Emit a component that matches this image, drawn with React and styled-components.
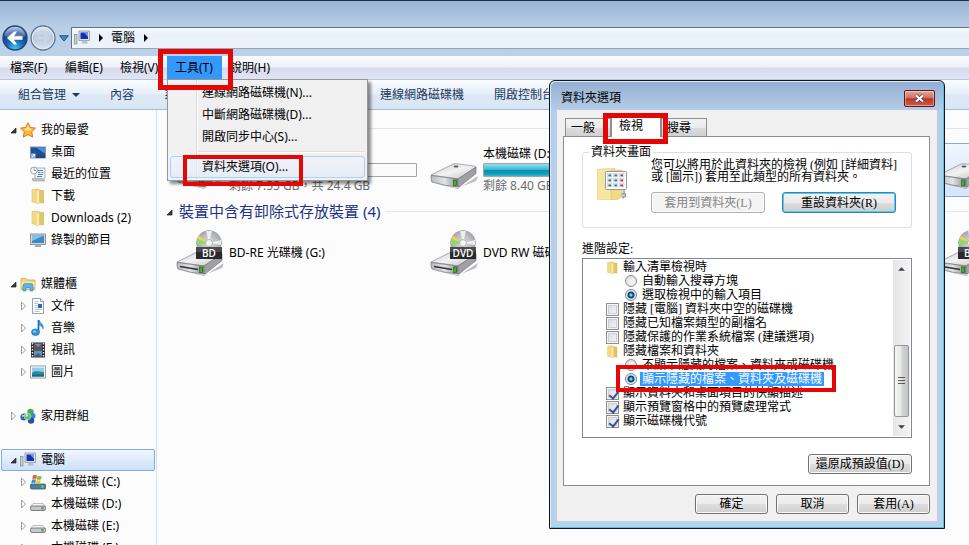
import React from 'react';
import styled, { createGlobalStyle, css } from 'styled-components';

const GlobalStyle = createGlobalStyle`
  * { box-sizing: border-box; }
  body {
    margin: 0;
    overflow: hidden;
    background: #fcfcfc;
    font-family: "Noto Sans", "Noto Sans CJK TC", sans-serif;
    font-size: 12px;
    line-height: 16px;
    color: #000;
  }
  button, input { font: inherit; color: inherit; margin: 0; }
  svg { display: block; flex: none; }
`;

/* ---------- explorer window ---------- */

const Explorer = styled.div`
  position: relative;
  display: flex;
  flex-direction: column;
  height: 100vh;
  overflow: hidden;
`;

const NavBar = styled.header`
  display: flex;
  align-items: center;
  height: 56px;
  flex: none;
  padding: 19px 0 0 2px;
  border-top: 1px solid #222f42;
  background: linear-gradient(#98b4d4, #b9cfe8 50%, #bbd1ea);
`;

const RoundButton = styled.button`
  width: 26px;
  height: 26px;
  margin-right: 2px;
  padding: 0;
  border: 0;
  background: none;
`;

const HistoryButton = styled.button`
  width: 13px;
  height: 20px;
  padding: 6px 1px;
  border: 0;
  background: none;
`;

const AddressBar = styled.nav`
  display: flex;
  align-items: center;
  flex: 1;
  gap: 8px;
  height: 22px;
  padding: 0 0 1px 2px;
  border: 1px solid #5f7288;
  border-right: 0;
  border-bottom-color: #93a6bc;
  background: linear-gradient(#f8fbfe, #e9f1fa 30%, #edf3fb);
`;

const Crumb = styled.a`
  color: #000;
  text-decoration: none;
`;

const MenuBar = styled.nav`
  display: flex;
  height: 23px;
  flex: none;
  padding-left: 2px;
  background: linear-gradient(#fdfdff, #eef0f8 48%, #d6daec 52%, #e0e4f4);
`;

const MenuSlot = styled.div`
  position: relative;
  width: 55px;
`;

const MenuButton = styled.button`
  width: 100%;
  height: 23px;
  padding: 0 0 0 8px;
  border: 0;
  text-align: left;
  white-space: nowrap;
  background: ${({ $open }) => ($open ? '#3399ff' : 'none')};
`;

const DropDown = styled.div`
  position: absolute;
  z-index: 2;
  top: 23px;
  left: 0;
  width: 201px;
  padding: 2px;
  border: 1px solid #979797;
  background: linear-gradient(90deg, #f1f1f1 28px, #dcdcdc 28px, #dcdcdc 29px, #fff 29px, #fff 30px, #f0f0f0 30px);
  box-shadow: 3px 3px 3px rgba(0, 0, 0, 0.45);
`;

const DropItem = styled.button`
  position: relative;
  display: block;
  width: 100%;
  height: 22px;
  padding: 0 0 0 31px;
  border: 1px solid ${({ $hot }) => ($hot ? '#aecff7' : 'transparent')};
  border-radius: 3px;
  text-align: left;
  background: ${({ $hot }) => ($hot ? 'linear-gradient(rgba(240,245,252,.7), rgba(225,235,248,.7))' : 'none')};
`;

const DropLine = styled.hr`
  height: 2px;
  margin: 3px 0 3px 28px;
  border: 0;
  border-top: 1px solid #e0e0e0;
  background: #fff;
`;

// Red frame that points out a step
const Mark = styled.span`
  position: absolute;
  z-index: 4;
  top: ${({ $top }) => $top}px;
  left: ${({ $left }) => $left}px;
  width: ${({ $w }) => $w}px;
  height: ${({ $h }) => $h}px;
  border: ${({ $thick }) => ($thick ? 5 : 4)}px solid #e60606;
  pointer-events: none;
`;

const ToolBar = styled.div`
  display: flex;
  align-items: center;
  gap: 30px;
  height: 31px;
  flex: none;
  padding-left: 18px;
  border-top: 1px solid #b9c6dc;
  border-bottom: 1px solid #a0bbd8;
  background: linear-gradient(#fafcff, #e6eff9 48%, #dce8f6 52%, #dae7f5);
`;

const ToolButton = styled.button`
  display: flex;
  align-items: center;
  gap: 6px;
  padding: 0;
  border: 0;
  color: #1e395b;
  white-space: nowrap;
  background: none;
`;

const Columns = styled.div`
  display: flex;
  flex: 1;
  min-height: 0;
`;

/* ---------- navigation pane ---------- */

const SidePane = styled.nav`
  width: 157px;
  flex: none;
  padding: 9px 1px 0;
  border-right: 1px solid #d3e2f1;
  overflow: hidden;
`;

const SideGroup = styled.div`
  margin-bottom: 22px;
`;

const SideRow = styled.a`
  display: flex;
  align-items: center;
  height: 22px;
  padding-left: ${({ $child }) => ($child ? 18 : 8)}px;
  border: 1px solid transparent;
  border-radius: 2px;
  color: #000;
  text-decoration: none;
  white-space: nowrap;
  ${({ $active }) => $active && css`
    border-color: #84acdd;
    background: linear-gradient(#f0f6fd, #cbe0fa);
  `}
`;

const Twist = styled.span`
  width: 10px;
  flex: none;
`;

const RowIcon = styled.span`
  width: 16px;
  margin-right: 5px;
`;

/* ---------- drive list ---------- */

const Main = styled.main`
  flex: 1;
  min-width: 0;
  padding: 9px 0 0 9px;
  overflow: hidden;
`;

const GroupTitle = styled.h2`
  display: flex;
  align-items: center;
  height: 19px;
  margin: 0 0 5px;
  gap: 5px;
  font-size: 15px;
  font-weight: normal;
  line-height: 19px;
  color: #1e3287;
  white-space: nowrap;
  &::after {
    content: '';
    flex: 1;
    height: 1px;
    background: #e2e4ea;
  }
`;

const DriveGrid = styled.div`
  display: grid;
  grid-template-columns: repeat(4, 248px);
  column-gap: 6px;
  margin: 0 0 5px 4px;
`;

const Drive = styled.div`
  display: flex;
  align-items: center;
  gap: 5px;
  height: 54px;
  padding-left: 5px;
  border: 1px solid ${({ $active }) => ($active ? '#84acdd' : 'transparent')};
  border-radius: 2px;
  background: ${({ $active }) => ($active ? 'linear-gradient(#f0f6fd, #d3e5fa)' : 'none')};
`;

const DriveInfo = styled.div`
  flex: 1;
  white-space: nowrap;
`;

const Meter = styled.div`
  height: 14px;
  margin: 1px 0;
  border: 1px solid #a3a5a8;
  border-radius: 1px;
  background: #fbfbfb;
`;

const MeterFill = styled.div`
  height: 12px;
  background: linear-gradient(#8fe0ef, #3fbcd6 45%, #0a8ca8 52%, #12a0bb 85%, #2fc0d8);
`;

const Free = styled.div`
  color: #6d6d6d;
`;

/* ---------- folder options dialog ---------- */

const Dialog = styled.section`
  position: absolute;
  z-index: 3;
  top: 80px;
  left: 549px;
  width: 396px;
  padding: 1px 7px 7px;
  border: 1px solid #0b1722;
  border-radius: 6px 6px 0 0;
  background: linear-gradient(#92aed0, #b5cde8 29px, #b9d1e9);
  box-shadow: inset 1px 1px 0 #dbe9f6, inset -1px -1px 0 #4fc4e0;
  font-family: "Liberation Serif", "Noto Sans CJK TC", serif;
`;

const TitleBar = styled.div`
  display: flex;
  align-items: center;
  justify-content: space-between;
  height: 28px;
  padding: 4px 2px 0 4px;
`;

const DialogTitle = styled.h1`
  margin: 0;
  font-size: 12px;
  font-weight: normal;
`;

const CloseButton = styled.button`
  display: flex;
  align-items: center;
  justify-content: center;
  width: 31px;
  height: 17px;
  padding: 0;
  border: 1px solid #5c1a1c;
  border-radius: 2px;
  background: linear-gradient(#e3a79c, #cf6f61 46%, #b83524 52%, #cd5f4a);
  box-shadow: inset 0 0 0 1px rgba(255, 255, 255, 0.4);
`;

const DialogBody = styled.div`
  padding: 6px 7px 7px 6px;
  background: #f0f0f0;
`;

const Tabs = styled.div`
  position: relative;
  display: flex;
  align-items: flex-end;
  height: 20px;
  padding-left: 2px;
`;

const Tab = styled.button`
  width: 46px;
  height: 18px;
  padding: 0 0 0 5px;
  border: 1px solid #8c8e94;
  border-bottom: 0;
  text-align: left;
  line-height: 16px;
  background: linear-gradient(#f3f3f3, #ebebeb 50%, #dddddd 52%, #d0d0d0);
  ${({ $active }) => $active && css`
    position: relative;
    width: 50px;
    height: 21px;
    margin-bottom: -1px;
    padding: 0 0 3px 7px;
    background: #fff;
  `}
`;

const TabPage = styled.div`
  padding: 8px 17px 11px 18px;
  border: 1px solid #8c8e94;
  background: #fff;
`;

const ViewsBox = styled.fieldset`
  display: flex;
  align-items: flex-start;
  gap: 22px;
  min-width: 0;
  height: 83px;
  margin: 0;
  padding: 0 12px 0 14px;
  border: 1px solid #d5dfe5;
  border-radius: 3px;
  legend {
    margin-left: -8px;
    padding: 0 2px;
    height: 14px;
    line-height: 14px;
  }
`;

const ViewsPicture = styled.div`
  padding-top: 9px;
`;

const ViewsText = styled.p`
  margin: 0 0 9px;
  line-height: 12px;
  white-space: nowrap;
`;

const ButtonRow = styled.div`
  display: flex;
  justify-content: ${({ $end }) => ($end ? 'flex-end' : 'flex-start')};
  gap: ${({ $wide }) => ($wide ? 17 : 8)}px;
  margin-top: ${({ $top }) => $top || 0}px;
`;

const PushButton = styled.button`
  width: ${({ $w }) => $w || 73}px;
  height: ${({ $tall }) => ($tall ? 21 : 20)}px;
  padding: 0;
  border: 1px solid #707070;
  border-radius: 3px;
  line-height: 16px;
  white-space: nowrap;
  background: linear-gradient(#f2f2f2, #ebebeb 50%, #dddddd 51%, #cfcfcf);
  box-shadow: inset 0 0 0 1px #fafafa;
  ${({ $default }) => $default && css`
    border-color: #3c7fb1;
    box-shadow: inset 0 0 0 1px #45d1f4;
  `}
  &:disabled {
    border-color: #adb2b5;
    color: #838383;
    background: #f4f4f4;
  }
`;

const ListLabel = styled.div`
  margin: 13px 0 1px;
`;

const ListBox = styled.div`
  display: flex;
  height: 180px;
  border: 1px solid #828790;
`;

const Options = styled.div`
  position: relative;
  flex: 1;
  padding: 1px 0 0 23px;
`;

const Option = styled.label`
  display: flex;
  align-items: center;
  height: 14px;
  gap: ${({ $radio }) => ($radio ? 5 : 4)}px;
  padding-left: ${({ $radio }) => ($radio ? 19 : 0)}px;
  line-height: 14px;
  white-space: nowrap;
`;

const OptionText = styled.span`
  margin-left: -2px;
  padding: 0 2px;
  ${({ $selected }) => $selected && css`
    color: #fff;
    background: #3399ff;
  `}
`;

const OptionIcon = styled.span`
  width: 13px;
`;

const Radio = styled.input`
  appearance: none;
  width: 12px;
  height: 12px;
  flex: none;
  border: 1px solid #8e8f8f;
  border-radius: 50%;
  background: radial-gradient(circle at 60% 60%, #fafafa, #d2d5d8);
  &:checked {
    border-color: #77808a;
    background: radial-gradient(circle, #5fd6f6 0 1px, #0d5f8f 2px, #0b3558 3px, #e9eef2 4px);
  }
`;

const Check = styled.input`
  appearance: none;
  position: relative;
  width: 13px;
  height: 13px;
  flex: none;
  border: 1px solid #8e8f8f;
  background: linear-gradient(135deg, #d5d9de, #f8f8f8);
  box-shadow: inset 0 0 0 1px #f4f4f4, inset 0 0 0 2px #ccd0d5;
  &:checked::after {
    content: '';
    position: absolute;
    top: 1px;
    left: 4px;
    width: 4px;
    height: 8px;
    border: solid #3f4f9c;
    border-width: 0 2px 2px 0;
    transform: rotate(38deg);
  }
`;

const ScrollBar = styled.div`
  display: flex;
  flex-direction: column;
  align-items: center;
  width: 17px;
  margin: 1px;
  padding: 5px 1px 5px;
  background: linear-gradient(90deg, #e6e6e6, #f3f3f3);
`;

const Thumb = styled.div`
  display: flex;
  align-items: center;
  justify-content: center;
  width: 15px;
  height: 72px;
  margin: auto 0 6px;
  border: 1px solid #979797;
  border-radius: 2px;
  background: linear-gradient(90deg, #f5f5f5, #e8e8ea 48%, #d4d5d8 52%, #c2c3c7);
`;

/* ---------- drawings ---------- */

function BackArrow() {
  return (
    <svg width="26" height="26" viewBox="0 0 26 26">
      <defs>
        <radialGradient id="backBall" cx=".5" cy=".95" r=".9">
          <stop offset="0" stopColor="#3fc8f4" />
          <stop offset=".45" stopColor="#1560ae" />
          <stop offset=".75" stopColor="#164488" />
          <stop offset="1" stopColor="#9dbbe0" />
        </radialGradient>
      </defs>
      <circle cx="13" cy="13" r="12" fill="url(#backBall)" stroke="#29456e" strokeWidth="1.4" />
      <path d="M3 11a10 9 0 0 1 20 0c-6 2-14 2-20 0z" fill="#fff" opacity=".28" />
      <path d="M5 13 12 6.500h3L12 11.300h8.500v3.400H12l3 4.800h-3z" fill="#fff" />
    </svg>
  );
}

function ForwardArrow() {
  return (
    <svg width="26" height="26" viewBox="0 0 26 26">
      <defs>
        <linearGradient id="fwdBall" x1="0" y1="0" x2="0" y2="1">
          <stop offset="0" stopColor="#dfe8f3" />
          <stop offset=".5" stopColor="#b6c7dc" />
          <stop offset="1" stopColor="#d9e7f4" />
        </linearGradient>
      </defs>
      <circle cx="13" cy="13" r="12" fill="url(#fwdBall)" stroke="#5f7490" strokeWidth="1.300" />
      <circle cx="13" cy="13" r="10.800" fill="none" stroke="#eef4fa" strokeWidth=".8" />
      <path d="M21 13 14 6.500h-3l3 4.800H5.500v3.400H14l-3 4.800h3z" fill="#c9d5e4" stroke="#b9c8da" strokeWidth=".4" />
    </svg>
  );
}

function Triangle({ color = '#000', dir = 'right', small }) {
  const d = { right: 'M1 0 5 4 1 8z', down: 'M0 2h8L4 6z', up: 'M0 6h8L4 2z' }[dir];
  const width = dir === 'right' ? 5 : 8;
  return (
    <svg width={small ? 7 : width} height="8" viewBox={`0 0 ${width} 8`}>
      <path d={d} fill={color} />
    </svg>
  );
}

function Twisty({ open }) {
  return (
    <svg width="8" height="10" viewBox="0 0 8 10">
      {open
        ? <path d="M6 3v5H1z" fill="#3b3b3b" stroke="#1e1e1e" strokeWidth=".7" />
        : <path d="M1.500 1 5.500 5l-4 4z" fill="#fff" stroke="#9a9a9a" />}
    </svg>
  );
}

const folderShape = (
  <>
    <path d="M2 1.500 8 1v13.500L2 14z" fill="#f4dc85" stroke="#d3b45c" strokeWidth=".5" />
    <path d="M8 2.500h5.500V15L8 14.500z" fill="#e6c65c" stroke="#c9a74a" strokeWidth=".5" />
    <path d="M6 3.500 9.500 1.500V15L6 15.500z" fill="#fbedb0" stroke="#d6b85a" strokeWidth=".5" />
  </>
);

const driveShape = (
  <>
    <path d="M3 7.500h10l2.500 3H.500z" fill="#f4f4f4" stroke="#999" strokeWidth=".6" />
    <rect x=".5" y="10" width="15" height="4.500" rx="1.500" fill="#c6c8ca" stroke="#66696c" strokeWidth=".8" />
    <rect x="11.500" y="11" width="2" height="2.500" fill="#3aa03a" />
  </>
);

const computerShape = (
  <>
    <path d="M5 1h10.500v9.500H5z" fill="#dfe3e8" stroke="#7c858f" strokeWidth=".7" />
    <path d="M6.500 2.500h7.500V9H6.500z" fill="#1330b4" />
    <path d="M10 2.500h4V7z" fill="#6c9af0" />
    <path d="M8.500 10.500h4l1.500 3H7.500z" fill="#b9bec4" />
    <rect x=".5" y="4.500" width="2.500" height="9.500" fill="#c8d2c8" stroke="#6f8076" strokeWidth=".6" />
  </>
);

const shapes = {
  star: (
    <>
      <path d="M8 .8 10.300 5.500l5.200.6-3.800 3.700 1 5.300L8 12.600l-4.700 2.500 1-5.300L.5 6.100l5.200-.6z" fill="#fcb838" stroke="#dd7420" strokeWidth="1" />
      <path d="M8 3 9.500 6.500 13 7l-5 2-5-2 3.500-.5z" fill="#ffe58c" />
    </>
  ),
  desktop: (
    <>
      <rect x=".5" y="3" width="15" height="11" fill="#1d4f9c" stroke="#8396ab" />
      <path d="M6 3.500h9v6z" fill="#4f8ddb" />
      <path d="M1 11.500h14V14H1z" fill="#26486f" />
      <path d="M1 9.500h4.500V14H1z" fill="#7fb9e6" />
      <path d="M2 13 4.500 10.500M2.800 10.500h1.800v1.800" stroke="#fff" strokeWidth=".8" fill="none" />
    </>
  ),
  recent: (
    <>
      <path d="M5 2h10v10l-2 2.500H5z" fill="#eef1f4" stroke="#8c98a4" strokeWidth=".7" />
      <path d="M8 4.500h5M8 6.500h2.500M11.500 6.500h2M8 8.500h5M7 10.500h5" stroke="#5c82b0" />
      <path d="M2 12.500h11l2 2.500H3z" fill="#bfc6cc" stroke="#868f98" strokeWidth=".5" />
      <circle cx="4" cy="4.500" r="3.400" fill="#f8f9fa" stroke="#8d979f" strokeWidth=".9" />
      <path d="M4 2.500v2h2" stroke="#5c82b0" fill="none" strokeWidth=".8" />
    </>
  ),
  folder: folderShape,
  monitor: (
    <>
      <rect x=".5" y="2" width="15" height="10.500" fill="#cfd6dd" stroke="#78828c" strokeWidth=".8" />
      <rect x="2" y="3.500" width="12" height="7.500" fill="#3c87c9" />
      <path d="M2 3.500h12L2 9z" fill="#84c1ea" />
      <path d="M5.500 12.500h5l1 2.500h-7z" fill="#a3abb2" />
    </>
  ),
  library: (
    <>
      <path d="M1 2.500h5l1.500 1.500H15v9.500H1z" fill="#f3d57a" stroke="#c8a043" strokeWidth=".7" />
      <path d="M1.500 6h13v5h-13z" fill="#fbeaa8" />
      <path d="M3 15V9.500q0-2 2-2h6q2 0 2 2V15h-3v-3.500H6V15z" fill="#5cb5e8" stroke="#2f86c0" strokeWidth=".6" />
    </>
  ),
  document: (
    <>
      <path d="M2.500.5h8l3 3v12h-11z" fill="#fff" stroke="#7f868e" strokeWidth=".8" />
      <path d="M10.500.5v3h3" fill="#dfe4e9" stroke="#7f868e" strokeWidth=".7" />
      <path d="M4.500 3.500h4M4.500 5.500h4M4.500 7.500h3M4.500 9.500h3M4.500 11.500h7M4.500 13.500h5" stroke="#9cb3cc" strokeWidth=".8" />
      <rect x="8" y="6" width="4" height="4" fill="#2d65a8" />
    </>
  ),
  music: (
    <>
      <path d="M8.500 0v12" stroke="#2178c0" strokeWidth="1.800" />
      <path d="M9 0c1 3.500 5.500 4 4 9-.7-2.500-2.500-3.500-4-4z" fill="#3f9ddd" stroke="#1f73b8" strokeWidth=".5" />
      <ellipse cx="5.500" cy="12.200" rx="4" ry="3.300" fill="#2f97de" stroke="#1768a8" strokeWidth=".6" />
      <ellipse cx="4.500" cy="11.500" rx="1.500" ry="1" fill="#9bd4f6" />
    </>
  ),
  video: (
    <>
      <rect x="1" y=".5" width="14" height="15" fill="#272b31" />
      <path d="M4 1.500h8v6H4zM4 8.500h8v6H4z" fill="#4a9ad4" />
      <path d="M4 1.500 8 5l4-3.500v6H4zM4 14.500 8 11l4 3.500z" fill="#7c4a3c" />
      <path d="M2.500 1v14M13.500 1v14" stroke="#e9edf0" strokeWidth="1.400" strokeDasharray="1.500 1.500" />
    </>
  ),
  picture: (
    <>
      <rect x=".5" y="2" width="15" height="12" fill="#fff" stroke="#8a9299" strokeWidth=".9" />
      <rect x="2" y="3.500" width="12" height="9" fill="#8fcdf0" />
      <path d="M2 9c4-3 6-1 12-1v4.500H2z" fill="#2b8f86" />
      <path d="M2 11c4-1.500 8 .5 12-1v2.500H2z" fill="#1d5fa5" />
    </>
  ),
  homegroup: (
    <>
      <circle cx="4" cy="9" r="3.600" fill="#2c62c4" />
      <circle cx="10.500" cy="4" r="3.200" fill="#46b04a" />
      <circle cx="12.500" cy="8" r="3" fill="#3f86d8" />
      <circle cx="11" cy="12.500" r="3.200" fill="#2550a8" />
      <circle cx="7.500" cy="8.500" r="3.300" fill="#5cc054" stroke="#fff" strokeWidth=".5" />
      <circle cx="6.800" cy="7.500" r="1.200" fill="#dff5dc" />
      <circle cx="3" cy="7.800" r="1.100" fill="#bcd4f6" />
    </>
  ),
  computer: computerShape,
  systemDrive: (
    <>
      <rect x=".5" y="10" width="15" height="5" rx="1" fill="#4d8198" stroke="#3e5b68" strokeWidth=".8" />
      <rect x="11.500" y="11" width="2" height="3" fill="#5ed05e" />
      <path d="M3 1.500q2-1.200 4 0L6.200 5q-2-1-4 0z" fill="#e8582c" />
      <path d="M7.700 1.800q2 1 4 0L10.900 5.300q-2 1-4 0z" fill="#7fba3c" />
      <path d="M2 5.700q2-1 4 0l-.8 3.500q-2-1-4 0z" fill="#3f8fe0" />
      <path d="M6.700 6q2 1 4 0l-.8 3.500q-2 1-4 0z" fill="#f7c22e" />
    </>
  ),
  drive: driveShape,
};

function SmallIcon({ name, size = 16 }) {
  return <svg width={size} height={size} viewBox="0 0 16 16">{shapes[name]}</svg>;
}

const DiscLabel = styled.text`
  font-family: "Open Sans", sans-serif;
  font-size: 10px;
  font-weight: 600;
  fill: #fff;
`;

function DriveIcon({ label }) {
  return (
    <svg width="48" height="46" viewBox="0 0 48 46">
      <defs>
        <linearGradient id="driveTop" x1="0" y1="0" x2="1" y2="1">
          <stop offset="0" stopColor="#c9c9cb" />
          <stop offset=".5" stopColor="#f3f3f4" />
          <stop offset="1" stopColor="#bdbdc0" />
        </linearGradient>
        <linearGradient id="driveSide" x1="0" y1="0" x2="1" y2="0">
          <stop offset="0" stopColor="#b9babc" />
          <stop offset=".5" stopColor="#e3e4e6" />
          <stop offset="1" stopColor="#8b8d90" />
        </linearGradient>
        <radialGradient id="disc">
          <stop offset="0" stopColor="#f5f5f5" />
          <stop offset=".4" stopColor="#c8cacc" />
          <stop offset="1" stopColor="#a5a8ab" />
        </radialGradient>
      </defs>
      <g transform={label ? 'translate(0 3)' : 'translate(0 -1)'}>
        <path d="M3 37 28 43l20-13-2 5-18 7z" fill="#000" opacity=".25" />
        <path d="M1 29 22 18.500q2-1 4-.8l18 2.300q2.500.5 1 2L28 33z" fill="url(#driveTop)" stroke="#8b8d90" strokeWidth=".7" />
        <path d="M1 29.500 28 33v8q-13-1-26-5-1-1-1-6.500z" fill="url(#driveSide)" stroke="#707275" strokeWidth=".7" />
        <path d="M28 33 46 21v6.500L29 41h-1z" fill="#9fa1a4" stroke="#707275" strokeWidth=".7" />
        {label
          ? <path d="M4 33.500 22 36.500" stroke="#333" strokeWidth="1.300" />
          : <ellipse cx="26" cy="20.500" rx="2.500" ry="1" fill="#55585b" />}
        <rect x="23.500" y="34" width="3" height="5.500" fill="#3fae2c" stroke="#1b5a12" strokeWidth=".6" />
      </g>
      {label && (
        <>
          <circle cx="33" cy="13" r="12.500" fill="url(#disc)" stroke="#8f9295" strokeWidth=".5" />
          <path d="M33 13 21.500 9a12 12 0 0 0-.500 6z" fill="#8fd86a" />
          <path d="M33 13 23 5.500 21.500 9z" fill="#e9d25a" />
          <path d="M33 13 30 1h6zM33 13l12-3v5z" fill="#fff" opacity=".75" />
          <circle cx="33" cy="13" r="3.500" fill="#f4f4f4" stroke="#9b9ea0" strokeWidth=".7" />
          <rect x="20" y="17" width="26" height="12" fill="#2a2a2c" />
          <rect x="20" y="17" width="26" height="5" fill="#4b4b4e" />
          <DiscLabel x="33" y="27" textAnchor="middle">{label}</DiscLabel>
        </>
      )}
    </svg>
  );
}

function ViewsIcon() {
  const cells = [];
  for (let r = 0; r < 3; r += 1) {
    for (let c = 0; c < 3; c += 1) {
      cells.push(
        <g key={`${r}${c}`}>
          <rect x={10.5 + c * 6} y={5.5 + r * 5} width="4.500" height="3.500" fill="#dfe5ec" stroke="#b4bfca" strokeWidth=".4" />
          <rect x={11.5 + c * 6} y={6.5 + r * 5} width="2.500" height="1.800" fill={c === 2 ? '#b23a3a' : c === 1 ? '#3b6fb5' : '#2f7d68'} />
        </g>,
      );
    }
  }
  return (
    <svg width="32" height="34" viewBox="0 0 32 34">
      <path d="M.500 1.500 10 .500h8v31H.500z" fill="#f7e6a0" stroke="#e2ca7c" strokeWidth=".6" />
      <path d="M14 2h11v27l-5 2.500h-6z" fill="#f0d987" stroke="#dcc168" strokeWidth=".6" />
      <rect x="8.500" y="3.500" width="21" height="18" rx="1" fill="#fff" stroke="#8f99a3" />
      {cells}
      <path d="M27 22v4M24.500 26h4v2.500h-2.500v2" stroke="#8b98a5" strokeWidth="1.400" fill="none" />
    </svg>
  );
}

/* ---------- content ---------- */

const menus = ['檔案(F)', '編輯(E)', '檢視(V)', '工具(T)', '說明(H)'];
const tools = ['內容', '系統內容', '解除安裝或變更程式', '連線網路磁碟機', '開啟控制台'];

const places = [
  [
    { text: '我的最愛', icon: 'star', open: true },
    { text: '桌面', icon: 'desktop', child: true },
    { text: '最近的位置', icon: 'recent', child: true },
    { text: '下載', icon: 'folder', child: true },
    { text: 'Downloads (2)', icon: 'folder', child: true },
    { text: '錄製的節目', icon: 'monitor', child: true },
  ],
  [
    { text: '媒體櫃', icon: 'library', open: true },
    { text: '文件', icon: 'document', child: true, open: false },
    { text: '音樂', icon: 'music', child: true, open: false },
    { text: '視訊', icon: 'video', child: true, open: false },
    { text: '圖片', icon: 'picture', child: true, open: false },
  ],
  [{ text: '家用群組', icon: 'homegroup', open: false }],
  [
    { text: '電腦', icon: 'computer', open: true, active: true },
    { text: '本機磁碟 (C:)', icon: 'systemDrive', child: true, open: false },
    { text: '本機磁碟 (D:)', icon: 'drive', child: true, open: false },
    { text: '本機磁碟 (E:)', icon: 'drive', child: true, open: false },
    { text: '本機磁碟 (F:)', icon: 'drive', child: true, open: false },
  ],
];

const disks = [
  { name: '本機磁碟 (C:)', free: '剩餘 7.55 GB，共 24.4 GB', used: 0 },
  { name: '本機磁碟 (D:)', free: '剩餘 8.40 GB，共 97.6 GB', used: 91 },
  { name: '本機磁碟 (E:)', free: '剩餘 20.1 GB，共 97.6 GB', used: 79 },
  { name: '本機磁碟 (F:)', free: '剩餘 35.2 GB，共 97.6 GB', used: 64, active: true },
];

const removable = [
  { name: 'BD-RE 光碟機 (G:)', label: 'BD' },
  { name: 'DVD RW 磁碟機 (H:)', label: 'DVD' },
  { name: 'DVD 光碟機 (I:)', label: 'DVD' },
  { name: 'BD-ROM 光碟機 (J:)', label: 'BD' },
];

const options = [
  { type: 'folder', text: '輸入清單檢視時' },
  { type: 'radio', group: 'typing', text: '自動輸入搜尋方塊' },
  { type: 'radio', group: 'typing', text: '選取檢視中的輸入項目', on: true },
  { type: 'check', text: '隱藏 [電腦] 資料夾中空的磁碟機' },
  { type: 'check', text: '隱藏已知檔案類型的副檔名' },
  { type: 'check', text: '隱藏保護的作業系統檔案 (建議選項)' },
  { type: 'folder', text: '隱藏檔案和資料夾' },
  { type: 'radio', group: 'hidden', text: '不顯示隱藏的檔案、資料夾或磁碟機' },
  { type: 'radio', group: 'hidden', text: '顯示隱藏的檔案、資料夾及磁碟機', on: true, selected: true },
  { type: 'check', text: '顯示資料夾和桌面項目的快顯描述', on: true },
  { type: 'check', text: '顯示預覽窗格中的預覽處理常式', on: true },
  { type: 'check', text: '顯示磁碟機代號', on: true },
];

function ToolsMenu() {
  return (
    <DropDown>
      <DropItem>連線網路磁碟機(N)...</DropItem>
      <DropItem>中斷網路磁碟機(D)...</DropItem>
      <DropItem>開啟同步中心(S)...</DropItem>
      <DropLine />
      <DropItem $hot>
        資料夾選項(O)...
        <Mark $top={-2} $left={12} $w={120} $h={31} />
      </DropItem>
    </DropDown>
  );
}

function OptionRow({ option }) {
  const { type, group, text, on, selected } = option;
  return (
    <Option as={type === 'folder' ? 'div' : 'label'} $radio={type === 'radio'}>
      {type === 'folder' && <OptionIcon><SmallIcon name="folder" size={13} /></OptionIcon>}
      {type === 'radio' && <Radio type="radio" name={group} defaultChecked={on} />}
      {type === 'check' && <Check type="checkbox" defaultChecked={on} />}
      <OptionText $selected={selected}>{text}</OptionText>
    </Option>
  );
}

function FolderOptions() {
  return (
    <Dialog role="dialog" aria-labelledby="dialog-title">
      <TitleBar>
        <DialogTitle id="dialog-title">資料夾選項</DialogTitle>
        <CloseButton aria-label="關閉">
          <svg width="11" height="9" viewBox="0 0 11 9">
            <path d="M2 1.500 9 7.500M9 1.500 2 7.500" stroke="#4b3a42" strokeWidth="3.600" />
            <path d="M2 1.500 9 7.500M9 1.500 2 7.500" stroke="#fff" strokeWidth="2.200" />
          </svg>
        </CloseButton>
      </TitleBar>
      <DialogBody>
        <Tabs role="tablist">
          <Tab role="tab">一般</Tab>
          <Tab role="tab" aria-selected="true" $active>檢視</Tab>
          <Tab role="tab">搜尋</Tab>
          <Mark $top={-3} $left={40} $w={65} $h={31} $thick />
        </Tabs>
        <TabPage>
          <ViewsBox>
            <legend>資料夾畫面</legend>
            <ViewsPicture><ViewsIcon /></ViewsPicture>
            <div>
              <ViewsText>
                您可以將用於此資料夾的檢視 (例如 [詳細資料]<br />
                或 [圖示]) 套用至此類型的所有資料夾。
              </ViewsText>
              <ButtonRow $wide>
                <PushButton $w={114} $tall disabled>套用到資料夾(L)</PushButton>
                <PushButton $w={114} $tall $default>重設資料夾(R)</PushButton>
              </ButtonRow>
            </div>
          </ViewsBox>
          <ListLabel>進階設定:</ListLabel>
          <ListBox>
            <Options>
              {options.map((option) => <OptionRow key={option.text} option={option} />)}
              <Mark $top={106} $left={33} $w={220} $h={27} />
            </Options>
            <ScrollBar>
              <Triangle dir="up" color="#404040" small />
              <Thumb>
                <svg width="7" height="8" viewBox="0 0 7 8">
                  <path d="M0 .500h7M0 3.500h7M0 6.500h7" stroke="#5c5c5c" />
                </svg>
              </Thumb>
              <Triangle dir="down" color="#404040" small />
            </ScrollBar>
          </ListBox>
          <ButtonRow $end $top={16}>
            <PushButton $w={104}>還原成預設值(D)</PushButton>
          </ButtonRow>
        </TabPage>
        <ButtonRow $end $top={8}>
          <PushButton>確定</PushButton>
          <PushButton>取消</PushButton>
          <PushButton>套用(A)</PushButton>
        </ButtonRow>
      </DialogBody>
    </Dialog>
  );
}

export default function App() {
  return (
    <Explorer>
      <GlobalStyle />
      <NavBar>
        <RoundButton aria-label="上一頁"><BackArrow /></RoundButton>
        <RoundButton aria-label="下一頁"><ForwardArrow /></RoundButton>
        <HistoryButton aria-label="最近的頁面">
          <svg width="10" height="7" viewBox="0 0 10 7">
            <path d="M.700.800h8.600L5 6z" fill="#4a8cc4" stroke="#1d4a78" />
          </svg>
        </HistoryButton>
        <AddressBar>
          <SmallIcon name="computer" />
          <Triangle />
          <Crumb href="#computer">電腦</Crumb>
          <Triangle />
        </AddressBar>
      </NavBar>
      <MenuBar>
        {menus.map((menu) => {
          const open = menu === '工具(T)';
          return (
            <MenuSlot key={menu}>
              <MenuButton $open={open}>{menu}</MenuButton>
              {open && <ToolsMenu />}
              {open && <Mark $top={-7} $left={-9} $w={75} $h={41} $thick />}
            </MenuSlot>
          );
        })}
      </MenuBar>
      <ToolBar>
        <ToolButton>組合管理 <Triangle dir="down" color="#1e395b" /></ToolButton>
        {tools.map((tool) => <ToolButton key={tool}>{tool}</ToolButton>)}
      </ToolBar>
      <Columns>
        <SidePane>
          {places.map((group) => (
            <SideGroup key={group[0].text}>
              {group.map(({ text, icon, child, open, active }) => (
                <SideRow key={text} href={`#${icon}`} $child={child} $active={active}>
                  <Twist>{open !== undefined && <Twisty open={open} />}</Twist>
                  <RowIcon><SmallIcon name={icon} /></RowIcon>
                  {text}
                </SideRow>
              ))}
            </SideGroup>
          ))}
        </SidePane>
        <Main>
          <GroupTitle><Twisty open />硬碟 (4)</GroupTitle>
          <DriveGrid>
            {disks.map(({ name, free, used, active }) => (
              <Drive key={name} $active={active}>
                <DriveIcon />
                <DriveInfo>
                  <div>{name}</div>
                  <Meter><MeterFill style={{ width: `${used}%` }} /></Meter>
                  <Free>{free}</Free>
                </DriveInfo>
              </Drive>
            ))}
          </DriveGrid>
          <GroupTitle><Twisty open />裝置中含有卸除式存放裝置 (4)</GroupTitle>
          <DriveGrid>
            {removable.map(({ name, label }) => (
              <Drive key={name}>
                <DriveIcon label={label} />
                <DriveInfo>{name}</DriveInfo>
              </Drive>
            ))}
          </DriveGrid>
        </Main>
      </Columns>
      <FolderOptions />
    </Explorer>
  );
}
